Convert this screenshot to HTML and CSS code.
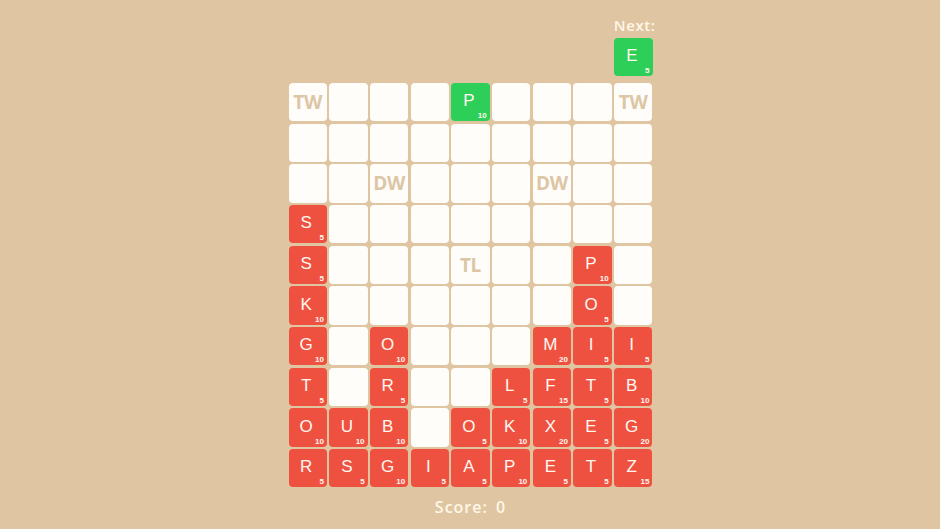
FILE: index.html
```html
<!DOCTYPE html>
<html>
<head>
<meta charset="utf-8">
<link rel="stylesheet" href="styles.css">
</head>
<body>
<div class="game">
  <div class="next">
    <div class="next-label">Next:</div>
    <div class="tile green"><span class="ch">E</span><span class="pts">5</span></div>
  </div>
  <div class="board">
    <div class="cell bonus">TW</div><div class="cell"></div><div class="cell"></div><div class="cell"></div><div class="tile green"><span class="ch">P</span><span class="pts">10</span></div><div class="cell"></div><div class="cell"></div><div class="cell"></div><div class="cell bonus">TW</div>

    <div class="cell"></div><div class="cell"></div><div class="cell"></div><div class="cell"></div><div class="cell"></div><div class="cell"></div><div class="cell"></div><div class="cell"></div><div class="cell"></div>

    <div class="cell"></div><div class="cell"></div><div class="cell bonus">DW</div><div class="cell"></div><div class="cell"></div><div class="cell"></div><div class="cell bonus">DW</div><div class="cell"></div><div class="cell"></div>

    <div class="tile red"><span class="ch">S</span><span class="pts">5</span></div><div class="cell"></div><div class="cell"></div><div class="cell"></div><div class="cell"></div><div class="cell"></div><div class="cell"></div><div class="cell"></div><div class="cell"></div>

    <div class="tile red"><span class="ch">S</span><span class="pts">5</span></div><div class="cell"></div><div class="cell"></div><div class="cell"></div><div class="cell bonus">TL</div><div class="cell"></div><div class="cell"></div><div class="tile red"><span class="ch">P</span><span class="pts">10</span></div><div class="cell"></div>

    <div class="tile red"><span class="ch">K</span><span class="pts">10</span></div><div class="cell"></div><div class="cell"></div><div class="cell"></div><div class="cell"></div><div class="cell"></div><div class="cell"></div><div class="tile red"><span class="ch">O</span><span class="pts">5</span></div><div class="cell"></div>

    <div class="tile red"><span class="ch">G</span><span class="pts">10</span></div><div class="cell"></div><div class="tile red"><span class="ch">O</span><span class="pts">10</span></div><div class="cell"></div><div class="cell"></div><div class="cell"></div><div class="tile red"><span class="ch">M</span><span class="pts">20</span></div><div class="tile red"><span class="ch">I</span><span class="pts">5</span></div><div class="tile red"><span class="ch">I</span><span class="pts">5</span></div>

    <div class="tile red"><span class="ch">T</span><span class="pts">5</span></div><div class="cell"></div><div class="tile red"><span class="ch">R</span><span class="pts">5</span></div><div class="cell"></div><div class="cell"></div><div class="tile red"><span class="ch">L</span><span class="pts">5</span></div><div class="tile red"><span class="ch">F</span><span class="pts">15</span></div><div class="tile red"><span class="ch">T</span><span class="pts">5</span></div><div class="tile red"><span class="ch">B</span><span class="pts">10</span></div>

    <div class="tile red"><span class="ch">O</span><span class="pts">10</span></div><div class="tile red"><span class="ch">U</span><span class="pts">10</span></div><div class="tile red"><span class="ch">B</span><span class="pts">10</span></div><div class="cell"></div><div class="tile red"><span class="ch">O</span><span class="pts">5</span></div><div class="tile red"><span class="ch">K</span><span class="pts">10</span></div><div class="tile red"><span class="ch">X</span><span class="pts">20</span></div><div class="tile red"><span class="ch">E</span><span class="pts">5</span></div><div class="tile red"><span class="ch">G</span><span class="pts">20</span></div>

    <div class="tile red"><span class="ch">R</span><span class="pts">5</span></div><div class="tile red"><span class="ch">S</span><span class="pts">5</span></div><div class="tile red"><span class="ch">G</span><span class="pts">10</span></div><div class="tile red"><span class="ch">I</span><span class="pts">5</span></div><div class="tile red"><span class="ch">A</span><span class="pts">5</span></div><div class="tile red"><span class="ch">P</span><span class="pts">10</span></div><div class="tile red"><span class="ch">E</span><span class="pts">5</span></div><div class="tile red"><span class="ch">T</span><span class="pts">5</span></div><div class="tile red"><span class="ch">Z</span><span class="pts">15</span></div>
  </div>
  <div class="score">Score: 0</div>
</div>
</body>
</html>
```
FILE: styles.css
```css
html, body {
  margin: 0;
  padding: 0;
  background: #dfc5a1;
  width: 940px;
  height: 529px;
  overflow: hidden;
}
.game {
  width: 364px;
  margin: 0 auto;
  padding-left: 1px;
  display: flex;
  flex-direction: column;
  font-family: "Liberation Sans", Arial, sans-serif;
}
.next {
  display: flex;
  flex-direction: column;
  align-items: flex-end;
  padding-top: 16px;
}
.next-label {
  font-family: "Open Sans", sans-serif;
  font-weight: 600;
  font-size: 15px;
  line-height: 19px;
  color: #fff7e8;
  letter-spacing: 0.6px;
  margin-right: -3px;
  margin-bottom: 3px;
}
.board {
  margin-top: 6.5px;
  display: grid;
  grid-template-columns: repeat(9, 38.4px);
  grid-auto-rows: 38.4px;
  gap: 2.3px;
}
.cell, .tile {
  width: 38.4px;
  height: 38.4px;
  border-radius: 4px;
  box-sizing: border-box;
}
.cell {
  background: #fffdf9;
  display: flex;
  align-items: center;
  justify-content: center;
}
.bonus {
  color: #dcc6a6;
  font-family: "Open Sans", sans-serif;
  font-weight: 700;
  font-size: 19px;
  letter-spacing: -0.3px;
}
.tile {
  position: relative;
  display: flex;
  align-items: center;
  justify-content: center;
  color: #fff8f0;
}
.red { background: #ef5141; }
.green { background: #2ecf58; }
.ch {
  font-size: 17px;
  margin-right: 3px;
  margin-top: -2px;
}
.pts {
  position: absolute;
  right: 3px;
  bottom: 1px;
  font-size: 8px;
  font-weight: 700;
  line-height: 9px;
}
.score {
  text-align: center;
  font-family: "Open Sans", sans-serif;
  font-weight: 600;
  font-size: 16px;
  color: #fff7e8;
  margin-top: 9px;
  letter-spacing: 1px;
  word-spacing: 3px;
}
```
